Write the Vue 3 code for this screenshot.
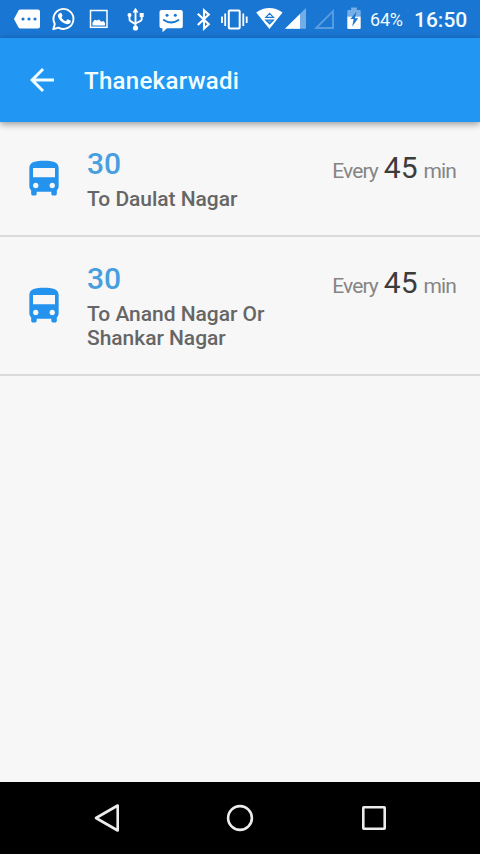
<script setup>
const routes = [
  { id: 1, number: '30', destination: 'To Daulat Nagar', interval: 45 },
  { id: 2, number: '30', destination: 'To Anand Nagar Or Shankar Nagar', interval: 45 },
]
</script>

<template>
  <div class="screen">
    <div class="status">
      <svg width="46" height="38" viewBox="0 0 46 38">
        <path d="M20.500 9.500H38q2 0 2 2v15q0 2-2 2H20.500q-1.200 0-2-1L14 19l4.500-8.500q.8-1 2-1z" fill="#fff" />
        <g fill="#1976d2"><circle cx="23" cy="19" r="1.600" /><circle cx="29" cy="19" r="1.600" /><circle cx="35" cy="19" r="1.600" /></g>
      </svg>
      <svg width="36" height="38" viewBox="46 0 36 38">
        <path d="M53.300 29.200l1.500-5.300a10 10 0 1 1 3.700 3.700z" fill="none" stroke="#fff" stroke-width="1.900" stroke-linejoin="round" />
        <path d="M60 12.900c.8-.4 1.300-.2 1.600.5l.9 2.100c.2.600-.6 1.400-1 1.900.9 1.800 2.400 3.100 4.300 3.900l1.400-1.600c.3-.4.7-.4 1.100-.2l2.100 1.100c.7.4.5 1.300.1 2-1 1.600-3.100 1.900-5.200 1.100-3.500-1.200-6.100-4-7.200-6.700-.7-1.800.2-3.400 1.900-4.100z" fill="#fff" />
      </svg>
      <svg width="34" height="38" viewBox="82 0 34 38">
        <rect x="90.500" y="10.500" width="16.500" height="16.800" fill="none" stroke="#fff" stroke-width="1.500" />
        <path d="M92.500 25.500v-3l2.200-2.800 2.300.8 2-1 2.200 2.200 2-.8 1.800 1.800v2.800z" fill="#fff" />
      </svg>
      <svg width="32" height="38" viewBox="116 0 32 38">
        <g fill="none" stroke="#fff" stroke-width="1.900">
          <path d="M135.500 28V11M129.500 16v3.300q0 1.200 1 1.800l5 3M141.700 15v4q0 1.200-1 1.800l-5.200 2.700" />
        </g>
        <g fill="#fff"><path d="M135.500 7.800l3 4.700h-6z" /><circle cx="135.500" cy="28" r="2.600" /><circle cx="129.500" cy="15" r="2" /><rect x="139.700" y="13" width="4" height="4" /></g>
      </svg>
      <svg width="42" height="38" viewBox="148 0 42 38">
        <path d="M161.500 10h19.300q2 0 2 2v14.200q0 2-2 2H167l-4.500 4v-4h-1q-2 0-2-2V12q0-2 2-2z" fill="#fff" />
        <g fill="#1976d2"><circle cx="167" cy="15.300" r="1.500" /><circle cx="175.300" cy="15.300" r="1.500" /></g>
        <path d="M163.800 20q7.300 5 14.700 0" fill="none" stroke="#1976d2" stroke-width="1.900" stroke-linecap="round" />
      </svg>
      <svg width="26" height="38" viewBox="190 0 26 38">
        <path d="M197.800 13.800l11 10.500-4.800 4.300V10.400l4.800 4.200-11 10.500" fill="none" stroke="#fff" stroke-width="2.100" />
      </svg>
      <svg width="36" height="38" viewBox="216 0 36 38">
        <rect x="228.800" y="10.600" width="10.900" height="18" rx="1" fill="none" stroke="#fff" stroke-width="2" />
        <path d="M225.200 13.500v12.500M222 16.500v6.500M243.300 13.500v12.500M246.700 16.500v6.500" fill="none" stroke="#fff" stroke-width="1.800" />
      </svg>
      <svg width="32" height="38" viewBox="252 0 32 38">
        <path d="M256.200 12.500q13.200-8.800 26.400 0L269.400 29z" fill="#fff" />
        <path d="M265.800 17.300l3.800-4 3.800 4z" fill="none" stroke="#1976d2" stroke-width="1.200" />
        <path d="M265.800 20h7.600l-3.800 4z" fill="#5c9fe0" stroke="#1976d2" stroke-width="1.200" />
      </svg>
      <svg width="28" height="38" viewBox="284 0 28 38">
        <path d="M285 28.800L306 8v20.800z" fill="#72ade5" />
        <path d="M285 28.800L300 14v14.800z" fill="#fff" />
      </svg>
      <svg width="28" height="38" viewBox="312 0 28 38">
        <path d="M316.200 28L333 11.200V28z" fill="none" stroke="#589de0" stroke-width="1.900" />
      </svg>
      <svg width="30" height="38" viewBox="340 0 30 38">
        <path d="M347.300 16.500V11q0-1 1-1h2.800V7.500h5.800V10h2.800q1 0 1 1v5.500z" fill="#75afe7" />
        <path d="M347.300 16.500h13.400V28q0 1-1 1h-11.400q-1 0-1-1z" fill="#fff" />
        <path d="M356.500 11.500l-6 7.500h3.200l-1.500 7.500 6-8.200h-3.300z" fill="#1976d2" />
      </svg>
      <span class="percent">64%</span>
      <span class="clock">16:50</span>
    </div>

    <header class="appbar">
      <svg class="back" width="36" height="36" viewBox="0 0 24 24">
        <path d="M20 11H7.830l5.590-5.590L12 4l-8 8 8 8 1.410-1.410L7.830 13H20v-2z" fill="#f2ffff" />
      </svg>
      <h1>Thanekarwadi</h1>
    </header>

    <main>
      <div v-for="route in routes" :key="route.id" class="row">
        <svg class="bus" width="44" height="44" viewBox="0 0 24 24">
          <path fill="#2493ee" d="M4 16c0 .88.39 1.670 1 2.220V20c0 .55.45 1 1 1h1c.55 0 1-.45 1-1v-1h8v1c0 .55.45 1 1 1h1c.55 0 1-.45 1-1v-1.780c.61-.55 1-1.340 1-2.220V6c0-3.500-3.580-4-8-4s-8 .5-8 4v10zm3.500 1c-.83 0-1.500-.67-1.500-1.500S6.670 14 7.500 14s1.500.67 1.500 1.500S8.330 17 7.500 17zm9 0c-.83 0-1.500-.67-1.500-1.500s.67-1.500 1.500-1.500 1.500.67 1.500 1.500-.67 1.500-1.500 1.500zm1.500-6H6V6h12v5z" />
        </svg>
        <div class="info">
          <div class="number">{{ route.number }}</div>
          <div class="destination">{{ route.destination }}</div>
        </div>
        <div class="every"><span>Every</span><b>{{ route.interval }}</b><span>min</span></div>
      </div>
    </main>

    <nav class="navbar">
      <svg width="36" height="36" viewBox="0 0 36 36"><path d="M29.700 5.500v25L8 18z" /></svg>
      <svg width="36" height="36" viewBox="0 0 36 36"><circle cx="18" cy="18" r="11.900" /></svg>
      <svg width="36" height="36" viewBox="0 0 36 36"><rect x="7.300" y="7.300" width="21.400" height="21.400" rx=".5" /></svg>
    </nav>
  </div>
</template>

<style>
body {
  margin: 0;
}
</style>

<style scoped>
.screen {
  width: 480px;
  height: 854px;
  display: flex;
  flex-direction: column;
  overflow: hidden;
  background: #f7f7f7;
  font-family: Roboto, "Liberation Sans", sans-serif;
}
svg {
  display: block;
  flex: none;
}
.status {
  height: 38px;
  flex: none;
  display: flex;
  background: #1976d2;
  color: #f2fbff;
  line-height: 40px;
  white-space: nowrap;
}
.percent {
  width: 44px;
  font-size: 18px;
  letter-spacing: -0.2px;
}
.clock {
  font-size: 21px;
  font-weight: 500;
}
.appbar {
  height: 84px;
  flex: none;
  display: flex;
  align-items: center;
  padding-left: 24px;
  background: #2196f3;
  box-shadow: 0 2px 7px rgba(0, 0, 0, 0.4);
}
h1 {
  margin: 2px 0 0 24px;
  color: #f2ffff;
  font-size: 24px;
  line-height: 28px;
  font-weight: 500;
  letter-spacing: 0.3px;
}
main {
  flex: 1;
}
.row {
  box-sizing: border-box;
  display: flex;
  align-items: center;
  padding: 24px 24px 24px 22px;
  border-bottom: 2px solid #dadada;
}
.bus {
  margin-top: 1px;
}
.info {
  width: 210px;
  margin-left: 21px;
}
.number {
  color: #479fdf;
  font-size: 30px;
  line-height: 35px;
  font-weight: 500;
}
.destination {
  margin-top: 6px;
  color: #666;
  font-size: 21px;
  line-height: 24px;
  font-weight: 500;
  letter-spacing: -0.04px;
}
.every {
  align-self: flex-start;
  flex: 1;
  display: flex;
  align-items: baseline;
  justify-content: flex-end;
  gap: 6px;
  margin-top: 4px;
  color: #858585;
  font-size: 21px;
  line-height: 35px;
  letter-spacing: -0.9px;
  white-space: nowrap;
}
.every b {
  color: #3c3c3c;
  font-size: 30px;
  font-weight: 400;
  letter-spacing: 0;
}
.navbar {
  height: 72px;
  flex: none;
  display: flex;
  align-items: center;
  justify-content: space-between;
  padding: 0 88px;
  background: #000;
}
.navbar svg {
  fill: none;
  stroke: #ececec;
  stroke-width: 2.6;
  stroke-linejoin: round;
}
</style>
